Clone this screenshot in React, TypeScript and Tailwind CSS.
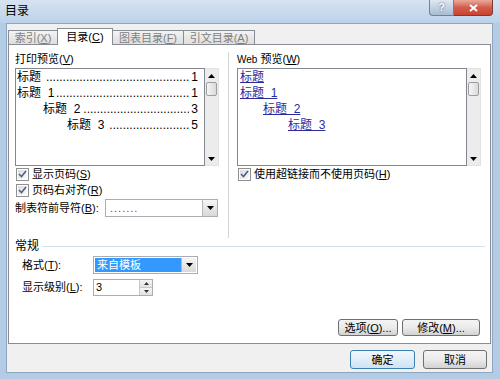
import React from "react";

const printRows = [
  { text: "标题", pad: "pl-[0px]", gap: "ml-[4px]", dots: 43, page: "1" },
  { text: "标题  1", pad: "pl-[0px]", gap: "ml-[1px]", dots: 40, page: "1" },
  { text: "标题  2", pad: "pl-[26px]", gap: "ml-[3px]", dots: 32, page: "3" },
  { text: "标题  3", pad: "pl-[50px]", gap: "ml-[3px]", dots: 24, page: "5" },
];

const webRows = [
  { text: "标题", pad: "pl-[0px]" },
  { text: "标题  1", pad: "pl-[0px]" },
  { text: "标题  2", pad: "pl-[23px]" },
  { text: "标题  3", pad: "pl-[48px]" },
];

function Key({ k }: { k: string }) {
  return (
    <span>
      (<span className="underline">{k}</span>)
    </span>
  );
}

function Down() {
  return (
    <svg width={7} height={4} viewBox="0 0 7 4">
      <path d="M0 0 L7 0 L3.5 4 Z" fill="#000" />
    </svg>
  );
}

function Up() {
  return (
    <svg width={7} height={4} viewBox="0 0 7 4">
      <path d="M0 4 L7 4 L3.5 0 Z" fill="#000" />
    </svg>
  );
}

function CheckBox({ children }: { children: React.ReactNode }) {
  return (
    <div className="flex items-center h-[16px]">
      <span className="ml-[1px] w-[13px] h-[13px] border border-[#8e8f8f] bg-white p-px">
        <span className="w-full h-full flex items-center justify-center bg-linear-to-br from-[#dcdcdc] to-[#fafafa]">
          <svg width="9" height="8" viewBox="0 0 9 8">
            <path d="M1 4 L3.5 6.5 L8 1" stroke="#4c5f8c" strokeWidth="1.6" fill="none" />
          </svg>
        </span>
      </span>
      <span className="ml-[3px] leading-[14px] whitespace-nowrap">{children}</span>
    </div>
  );
}

function ScrollBar() {
  return (
    <div className="w-[14px] h-full bg-[#ececec] border-y border-r border-[#e2e2e2] flex flex-col items-center">
      <div className="h-[13px] flex items-center justify-center">
        <Up />
      </div>
      <div className="w-[11px] h-[14px] border border-[#9c9c9c] rounded-[2px] bg-linear-to-r from-[#f6f6f6] to-[#dadada]" />
      <div className="flex-1" />
      <div className="h-[13px] flex items-center justify-center">
        <Down />
      </div>
    </div>
  );
}

function ArrowBtn({ w }: { w: string }) {
  return (
    <div className={`${w} h-full border-l border-[#b8b8b8] bg-linear-to-b from-[#f5f5f5] to-[#d9d9d9] flex items-center justify-center`}>
      <Down />
    </div>
  );
}

function WinButton({ w, children, focus }: { w: string; children: React.ReactNode; focus?: boolean }) {
  return (
    <div
      className={`${w} h-full rounded-[3px] border flex items-center justify-center leading-[14px] whitespace-nowrap ${
        focus
          ? "border-[#3c7fb1] bg-linear-to-b from-[#f2f8fc] to-[#cfe3f3]"
          : "border-[#707070] bg-linear-to-b from-[#f4f4f4] via-[#ebebeb] to-[#d2d2d2]"
      }`}
    >
      {children}
    </div>
  );
}

export default function App() {
  return (
    <div className="w-[500px] h-[379px] bg-[#b4cbe6] flex flex-col overflow-hidden text-[11px] text-black font-['Liberation_Sans','Noto_Sans_CJK_SC',sans-serif]">
      {/* title bar */}
      <div className="h-[23px] flex items-start justify-between bg-linear-to-b from-[#d6e2f0] to-[#bcd2ea]">
        <span className="ml-[5px] mt-[4px] leading-[14px] text-[12px]">目录</span>
        <div className="flex mr-[7px] h-[16px]">
          <div className="w-[25px] h-full border border-t-0 border-[#6f829c] rounded-bl-[4px] bg-linear-to-b from-[#dfe8f2] to-[#a9bcd3] flex items-center justify-center text-white font-bold text-[11px] leading-none [text-shadow:0_0_2px_#34495e]">
            ?
          </div>
          <div className="w-[39px] h-full border border-t-0 border-l-0 border-[#7a3b34] rounded-br-[4px] bg-linear-to-b from-[#e9a99b] via-[#d25c4b] to-[#c8432f] flex items-center justify-center">
            <svg width="9" height="8" viewBox="0 0 9 8">
              <path d="M1 1 L8 7 M8 1 L1 7" stroke="#fff" strokeWidth="2" />
            </svg>
          </div>
        </div>
      </div>

      {/* dialog body */}
      <div className="ml-[6px] w-[487px] h-[350px] border border-[#8fa6c0] bg-[#f0f0f0] pt-[4px]">
        {/* tabs */}
        <div className="ml-[1px] h-[16px] flex items-end whitespace-nowrap">
          <div className="w-[49px] h-[14px] border-l border-t border-[#898c95] bg-linear-to-b from-[#f3f3f3] to-[#dedede] flex items-center justify-center text-[#808080] leading-[12px]">
            索引<Key k="X" />
          </div>
          <div className="relative z-10 -mb-px w-[56px] h-[17px] border-x border-t border-[#898c95] bg-white flex items-center justify-center leading-[12px]">
            目录<Key k="C" />
          </div>
          <div className="w-[71px] h-[14px] border-t border-r border-[#898c95] bg-linear-to-b from-[#f3f3f3] to-[#dedede] flex items-center justify-center text-[#808080] leading-[12px]">
            图表目录<Key k="F" />
          </div>
          <div className="w-[71px] h-[14px] border-t border-r border-[#898c95] bg-linear-to-b from-[#f3f3f3] to-[#dedede] flex items-center justify-center text-[#808080] leading-[12px]">
            引文目录<Key k="A" />
          </div>
        </div>

        {/* tab panel */}
        <div className="ml-[1px] w-[483px] h-[300px] border border-[#898c95] bg-white flex flex-col">
          <div className="h-[194px] flex pl-[6px] pt-[7px]">
            {/* print preview */}
            <div className="w-[204px] flex flex-col">
              <div className="h-[14px] leading-[14px]">
                打印预览<Key k="V" />
              </div>
              <div className="mt-[2px] h-[98px] flex">
                <div className="w-[190px] h-full border border-[#828790] bg-white pl-px pr-[6px] text-[12px]">
                  {printRows.map((r, i) => (
                    <div key={i} className={`flex h-[16px] leading-[16px] items-center whitespace-pre ${r.pad}`}>
                      <span>{r.text}</span>
                      <span className={`flex-1 min-w-0 overflow-hidden text-right ${r.gap}`}>{".".repeat(r.dots)}</span>
                      <span className="ml-[2px]">{r.page}</span>
                    </div>
                  ))}
                </div>
                <ScrollBar />
              </div>
              <CheckBox>
                显示页码<Key k="S" />
              </CheckBox>
              <CheckBox>
                页码右对齐<Key k="R" />
              </CheckBox>
              <div className="mt-[1px] h-[18px] flex items-center">
                <span className="w-[90px] leading-[14px] whitespace-nowrap">
                  制表符前导符<Key k="B" />:
                </span>
                <div className="w-[113px] h-full border border-[#abadb3] bg-white flex">
                  <span className="flex-1 pl-[4px] leading-[16px] text-[#555] tracking-[1px]">.......</span>
                  <ArrowBtn w="w-[15px]" />
                </div>
              </div>
            </div>

            <div className="ml-[9px] w-px h-[186px] bg-[#d5d5d5]" />

            {/* web preview */}
            <div className="ml-[8px] w-[244px] flex flex-col">
              <div className="h-[14px] leading-[14px]">
                <span className="text-[10px]">Web</span> 预览<Key k="W" />
              </div>
              <div className="mt-[2px] h-[98px] flex">
                <div className="w-[230px] h-full border border-[#828790] bg-white pl-[2px] text-[12px]">
                  {webRows.map((r, i) => (
                    <div key={i} className={`flex h-[16px] leading-[16px] items-center whitespace-pre ${r.pad}`}>
                      <span className="underline text-[#2b2ba0]">{r.text}</span>
                    </div>
                  ))}
                </div>
                <ScrollBar />
              </div>
              <CheckBox>
                使用超链接而不使用页码<Key k="H" />
              </CheckBox>
            </div>
          </div>

          {/* general */}
          <div className="h-[14px] flex items-center pl-[6px] pr-[5px]">
            <span className="leading-[14px] text-[12px]">常规</span>
            <div className="flex-1 ml-[3px] h-px bg-[#d5dfe5]" />
          </div>
          <div className="mt-[3px] h-[18px] pl-[13px] flex items-center">
            <span className="w-[71px] leading-[14px] whitespace-nowrap">
              格式<Key k="T" />:
            </span>
            <div className="w-[105px] h-full border border-[#abadb3] bg-white flex p-px">
              <span className="w-[88px] bg-[#3399ff] text-white leading-[14px] pl-[2px]">来自模板</span>
              <ArrowBtn w="w-[15px]" />
            </div>
          </div>
          <div className="mt-[4px] h-[18px] pl-[13px] flex items-center">
            <span className="w-[71px] leading-[14px] whitespace-nowrap">
              显示级别<Key k="L" />:
            </span>
            <div className="w-[60px] h-[17px] border border-[#abadb3] bg-white flex">
              <span className="flex-1 pl-[2px] leading-[15px]">3</span>
              <div className="w-[13px] h-full flex flex-col border-l border-[#c8c8c8]">
                <div className="flex-1 flex items-center justify-center bg-linear-to-b from-[#f5f5f5] to-[#e2e2e2] border-b border-[#c8c8c8]">
                  <svg width="5" height="3" viewBox="0 0 5 3">
                    <path d="M0 3 L5 3 L2.5 0 Z" fill="#333" />
                  </svg>
                </div>
                <div className="flex-1 flex items-center justify-center bg-linear-to-b from-[#f5f5f5] to-[#e2e2e2]">
                  <svg width="5" height="3" viewBox="0 0 5 3">
                    <path d="M0 0 L5 0 L2.5 3 Z" fill="#333" />
                  </svg>
                </div>
              </div>
            </div>
          </div>

          <div className="mt-auto mb-[7px] h-[17px] flex justify-end pr-[10px] gap-[4px]">
            <WinButton w="w-[60px]">
              选项<Key k="O" />...
            </WinButton>
            <WinButton w="w-[78px]">
              修改<Key k="M" />...
            </WinButton>
          </div>
        </div>

        {/* dialog buttons */}
        <div className="mt-[6px] h-[19px] flex justify-end pr-[5px] gap-[8px]">
          <WinButton w="w-[65px]" focus>
            确定
          </WinButton>
          <WinButton w="w-[64px]">取消</WinButton>
        </div>
      </div>
    </div>
  );
}
